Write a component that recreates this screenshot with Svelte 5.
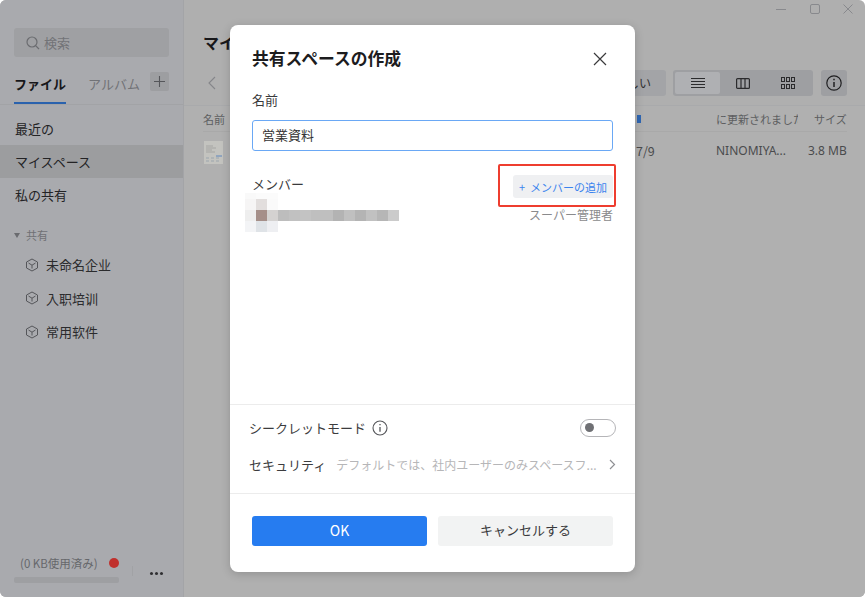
<script>
  const nav = ['未命名企业', '入职培训', '常用软件'];
  const cells = [
    ['#f9f9f9', '#fbfbfb', '#fbfbfb'],
    ['#f6f5f5', '#e2dedd', '#fafafa'],
    ['#eeeeee', '#a58f89', '#d4d2d1'],
    ['#f3f4f6', '#dfe3e7', '#eeeff2']
  ].flat();
  const blur = ['#bdbdbd', '#c1c1c1', '#c3c3c3', '#bfbfbf', '#bfbfbf', '#b3b3b3', '#c0c0c0', '#b4b4b4', '#c1c1c1', '#b6b6b6', '#cbcbcb'];
</script>

<div class="win">
  <aside class="side">
    <div class="search">
      <svg width="16" height="16" viewBox="0 0 16 16" fill="none" stroke="#6b6c70" stroke-width="1.2"><circle cx="7" cy="7" r="5"/><path d="M10.6 10.6 14 14"/></svg>
      <span>検索</span>
    </div>
    <div class="tabs">
      <span class="tab on">ファイル</span>
      <span class="tab">アルバム</span>
      <span class="plus">
        <svg width="11" height="11" viewBox="0 0 11 11" stroke="#55565a" stroke-width="1.1"><path d="M5.5 0v11M0 5.5h11"/></svg>
      </span>
    </div>
    <nav class="nav">
      <div class="item">最近の</div>
      <div class="item cur">マイスペース</div>
      <div class="item">私の共有</div>
    </nav>
    <div class="group"><i></i>共有</div>
    {#each nav as n}
      <div class="sub">
        <svg width="14" height="14" viewBox="0 0 14 14" fill="none" stroke="#55565a" stroke-width="1"><path d="M7 1 12.5 4v6L7 13 1.500 10V4z"/><path d="M3.500 5 7 7.200 10.500 5M7 7.200V10.500"/></svg>
        <span>{n}</span>
      </div>
    {/each}
    <div class="foot">
      <div class="usage">
        <div class="uline"><span>(0 KB使用済み)</span><b></b></div>
        <div class="bar"></div>
      </div>
      <div class="divider"></div>
      <div class="dots"><i></i><i></i><i></i></div>
    </div>
  </aside>

  <main class="main">
    <div class="wctl">
      <svg width="12" height="12" viewBox="0 0 12 12" stroke="#88898d" fill="none"><path d="M1 6.500h10"/></svg>
      <svg width="12" height="12" viewBox="0 0 12 12" stroke="#88898d" fill="none"><rect x="1.500" y="1.500" width="9" height="9" rx="1.500"/></svg>
      <svg width="12" height="12" viewBox="0 0 12 12" stroke="#88898d" fill="none"><path d="M1.500 1.500l9 9M10.500 1.500l-9 9"/></svg>
    </div>
    <div class="heading">マイスペース</div>
    <div class="tools">
      <svg class="back" width="8" height="14" viewBox="0 0 8 14" fill="none" stroke="#85868a" stroke-width="1.100"><path d="M7 1 1 7l6 6"/></svg>
      <div class="sp"></div>
      <div class="tbtn">しい</div>
      <div class="seg">
        <span class="segon">
          <svg width="14" height="10" viewBox="0 0 14 10" stroke="#2b2b2d"><path d="M0 .5h14M0 3.500h14M0 6.500h14M0 9.500h14"/></svg>
        </span>
        <span>
          <svg width="14" height="11" viewBox="0 0 14 11" fill="none" stroke="#2b2b2d" stroke-width="1.200"><rect x=".6" y=".6" width="12.800" height="9.800" rx="1"/><path d="M5 .6v9.800M9 .6v9.800"/></svg>
        </span>
        <span>
          <svg width="14" height="12" viewBox="0 0 14 12" fill="none" stroke="#2b2b2d"><rect x=".5" y=".5" width="3" height="4"/><rect x="5.500" y=".5" width="3" height="4"/><rect x="10.500" y=".5" width="3" height="4"/><rect x=".5" y="7.500" width="3" height="4"/><rect x="5.500" y="7.500" width="3" height="4"/><rect x="10.500" y="7.500" width="3" height="4"/></svg>
        </span>
      </div>
      <div class="ibtn">
        <svg width="16" height="16" viewBox="0 0 16 16" fill="none" stroke="#1f1f21" stroke-width="1.200"><circle cx="8" cy="8" r="7.200"/><path d="M8 7v5M8 3.800v1.500" stroke-width="1.500"/></svg>
      </div>
    </div>
    <div class="tablewrap">
      <div class="thead">
        <span class="cname">名前</span>
        <span class="mark"></span>
        <span class="cupd">に更新されました</span>
        <span class="csize">サイズ</span>
      </div>
      <div class="trow">
        <svg class="thumb" width="19" height="23" viewBox="0 0 19 23">
          <rect width="19" height="23" fill="#c3c3bf"/>
          <path d="M2 5h7M2 7h10M2 9h6M2 11h9" stroke="#a5a5a3" stroke-width="1"/>
          <path d="M12 15h6" stroke="#5f86bd" stroke-width="1"/>
          <path d="M2 17h3M7 17h3M12 17h3M2 20h3M7 20h3M12 20h3" stroke="#a9b0b4" stroke-width="1.500"/>
        </svg>
        <span class="date">7/9</span>
        <span class="owner">NINOMIYA...</span>
        <span class="size">3.8 MB</span>
      </div>
    </div>
  </main>

  <section class="dlg">
    <header class="dhead">
      <h2>共有スペースの作成</h2>
      <svg width="14" height="14" viewBox="0 0 14 14" stroke="#3a3a3c" stroke-width="1.200" fill="none"><path d="M1 1l12 12M13 1 1 13"/></svg>
    </header>
    <div class="lab">名前</div>
    <div class="inp">営業資料</div>
    <div class="mem">
      <span class="memlab">メンバー</span>
      <span class="addwrap"><span class="add">+&nbsp; メンバーの追加</span></span>
    </div>
    <div class="person">
      <div class="pix">
        {#each cells as c}<i style:background={c}></i>{/each}
      </div>
      <div class="blurname">
        {#each blur as c}<i style:background={c}></i>{/each}
      </div>
      <span class="role">スーパー管理者</span>
    </div>
    <div class="fill"></div>
    <div class="opts">
      <div class="opt">
        <span class="optl">シークレットモード</span>
        <svg class="info" width="16" height="16" viewBox="0 0 16 16" fill="none" stroke="#55565a" stroke-width="1.100"><circle cx="8" cy="8" r="7"/><path d="M8 7v4.800M8 4v1.300" stroke-width="1.300"/></svg>
        <span class="tog"><i></i></span>
      </div>
      <div class="opt sec">
        <span class="optl">セキュリティ</span>
        <span class="hint">デフォルトでは、社内ユーザーのみスペースフ...</span>
        <svg width="7" height="11" viewBox="0 0 7 11" fill="none" stroke="#8f9094" stroke-width="1.200"><path d="M1 1l4.500 4.500L1 10"/></svg>
      </div>
    </div>
    <footer class="dfoot">
      <button class="ok">OK</button>
      <button class="cancel">キャンセルする</button>
    </footer>
  </section>
</div>

<style>
  :global(body) { margin: 0; background: #fff; }
  .win {
    position: relative;
    width: 865px;
    height: 597px;
    display: flex;
    overflow: hidden;
    border-radius: 6px;
    background: #afafaf;
    font-family: "Noto Sans CJK JP", "Noto Sans", sans-serif;
    color: #2a2a2c;
  }
  .side {
    width: 184px;
    flex: none;
    box-sizing: border-box;
    padding-top: 28px;
    background: #a9aaae;
    border-right: 1px solid #a3a4a7;
    display: flex;
    flex-direction: column;
  }
  .search {
    margin: 0 14px;
    height: 29px;
    border-radius: 3px;
    background: #9fa0a3;
    display: flex;
    align-items: center;
    gap: 3px;
    padding-left: 11px;
    font-size: 13px;
    color: #727377;
  }
  .tabs {
    height: 48px;
    box-sizing: border-box;
    display: flex;
    align-items: center;
    border-bottom: 1px solid #a2a3a6;
    padding: 4px 15px 0 14px;
    position: relative;
    font-size: 13px;
    color: #717276;
  }
  .tab { margin-right: 22px; padding-top: 1px; height: 31px; box-sizing: border-box; align-self: flex-end; white-space: nowrap; }
  .tab.on { color: #17171a; font-weight: 700; border-bottom: 2px solid #2a62ad; margin-right: 22px; }
  .plus {
    position: absolute;
    right: 14px;
    top: 15px;
    width: 19px;
    height: 19px;
    border-radius: 2px;
    background: #9d9ea1;
    display: grid;
    place-items: center;
  }
  .nav { margin-top: 7px; }
  .item { height: 33px; line-height: 33px; padding-left: 15px; font-size: 13px; color: #232325; }
  .item.cur { background: #9c9d9f; }
  .group { margin-top: 13px; margin-bottom: 2px; height: 22px; display: flex; align-items: center; padding-left: 14px; font-size: 11px; color: #707175; gap: 6px; }
  .group i { width: 0; height: 0; border-left: 3.500px solid transparent; border-right: 3.500px solid transparent; border-top: 5px solid #6a6b6f; }
  .sub { height: 33.500px; display: flex; align-items: center; padding-left: 25px; gap: 7px; font-size: 13px; color: #2b2b2d; }
  .foot { margin-top: auto; height: 43px; display: flex; padding: 0 20px 0 14px; box-sizing: border-box; margin-bottom: 2px; }
  .usage { width: 105px; flex: none; }
  .uline { display: flex; align-items: center; justify-content: space-between; font-size: 11.500px; color: #66676b; padding: 0 0 0 6px; height: 22px; white-space: nowrap; }
  .uline b { width: 10px; height: 10px; border-radius: 50%; background: #c0302c; flex: none; }
  .bar { height: 6px; margin-top: 3px; border-radius: 2px; background: #9e9fa2; }
  .divider { width: 1px; height: 10px; background: #a1a2a5; margin: 14px 0 0 13px; }
  .dots { display: flex; gap: 2px; margin: 20px 0 0 17px; height: 3px; }
  .dots i { width: 3px; height: 3px; border-radius: 50%; background: #2f2f31; }

  .main { flex: 1; display: flex; flex-direction: column; min-width: 0; }
  .wctl { height: 20px; display: flex; justify-content: flex-end; align-items: center; gap: 21.500px; padding-right: 11px; }
  .wctl svg { position: relative; top: -1px; }
  .heading { height: 45px; padding: 1px 0 0 19px; box-sizing: border-box; margin-top: 9px; font-size: 16px; font-weight: 700; color: #17171a; }
  .tools { height: 30px; display: flex; align-items: center; gap: 8px; padding: 0 18px 0 24px; margin-top: -6px; margin-bottom: 7px; }
  .sp { flex: 1; }
  .tbtn { height: 26px; width: 50px; box-sizing: border-box; border-radius: 3px; background: #a3a4a7; font-size: 12px; line-height: 26px; padding-right: 15px; text-align: right; color: #2f2f31; margin-right: -1px; }
  .seg { height: 26px; padding: 2px; width: 140px; box-sizing: border-box; border-radius: 3px; background: #9e9fa2; display: flex; }
  .seg span { flex: 1; display: grid; place-items: center; border-radius: 2px; }
  .seg .segon { background: #afb0b3; flex: 0 0 45px; }
  .ibtn { height: 26px; width: 26px; border-radius: 3px; background: #9e9fa2; display: grid; place-items: center; }
  .tablewrap { flex: 1; background: #b0b0b0; border-top: 1px solid #a9aaac; padding: 0 18px 0 19px; }
  .thead { height: 25px; display: flex; align-items: center; border-bottom: 1px solid #a9a9a9; font-size: 11px; color: #5d5e60; }
  .cname { width: 434px; flex: none; }
  .mark { width: 4px; height: 8px; background: #2f66b2; margin-right: 75px; flex: none; }
  .cupd { width: 82px; flex: none; white-space: nowrap; overflow: hidden; margin-right: 16px; }
  .csize { white-space: nowrap; }
  .trow { height: 36px; display: flex; align-items: center; font-size: 12px; color: #4a4b4d; }
  .thumb { flex: none; margin: 5px 0 0 1px; }
  .date { margin-left: 413px; width: 80px; flex: none; font-size: 12.500px; }
  .owner { width: 92px; flex: none; font-family: "Noto Sans", sans-serif; }
  .size { white-space: nowrap; font-family: "Noto Sans", sans-serif; }

  .dlg {
    position: absolute;
    left: 230px;
    top: 25px;
    width: 405px;
    height: 547px;
    background: #fff;
    border-radius: 8px;
    box-shadow: 0 2px 10px rgba(0, 0, 0, 0.18);
    display: flex;
    flex-direction: column;
    box-sizing: border-box;
  }
  .dhead { display: flex; align-items: center; justify-content: space-between; padding: 20px 28px 0 22px; height: 27px; }
  h2 { margin: 0; font-size: 16.800px; font-weight: 700; color: #1c1c1e; line-height: 27px; }
  .lab { margin: 17px 22px 0; font-size: 13px; line-height: 22px; color: #3a3a3c; }
  .inp {
    margin: 9px 22px 0;
    height: 31px;
    box-sizing: border-box;
    border: 1px solid #6aa8f5;
    border-radius: 3px;
    padding-left: 9px;
    font-size: 13px;
    line-height: 28px;
    color: #333;
  }
  .mem { margin: 13px 22px 0; height: 43px; display: flex; justify-content: space-between; align-items: center; }
  .memlab { font-size: 13px; color: #3a3a3c; margin-bottom: 4px; }
  .addwrap {
    position: relative;
    right: -3px;
    width: 118px;
    height: 43px;
    box-sizing: border-box;
    border: 2px solid #ee3d2f;
    border-radius: 2px;
    padding: 9px 0 0 13px;
  }
  .add {
    display: block;
    width: 100px;
    height: 23px;
    border-radius: 3px;
    background: #eff0f2;
    font-size: 11px;
    line-height: 24px;
    color: #3b84ee;
    padding-left: 6px;
    box-sizing: border-box;
    white-space: nowrap;
  }
  .person { position: relative; height: 34px; margin-top: -14px; }
  .pix { position: absolute; left: 15px; top: 0; display: grid; grid-template-columns: repeat(3, 11px); grid-template-rows: 6px 11px 11px 11px; }
  .pix i, .blurname i { display: block; }
  .blurname { position: absolute; left: 48px; top: 17px; display: grid; grid-template-columns: repeat(11, 11px); grid-auto-rows: 11px; }
  .role { position: absolute; right: 22px; top: 14px; font-size: 12px; line-height: 16px; color: #8a8a8c; }
  .fill { flex: 1; }
  .opts { border-top: 1px solid #ececec; border-bottom: 1px solid #ececec; height: 90px; padding: 0 19px; box-sizing: border-box; }
  .opt { display: flex; align-items: center; height: 37px; font-size: 13px; color: #3c3c3e; }
  .opt:first-child { margin-top: 4px; }
  .optl { white-space: nowrap; }
  .info { margin-left: 6px; }
  .tog { margin-left: auto; width: 36px; height: 18px; box-sizing: border-box; border: 1px solid #b5b5b8; border-radius: 9px; display: flex; align-items: center; padding-left: 4px; }
  .tog i { width: 9px; height: 9px; border-radius: 50%; background: #6f7074; }
  .sec { justify-content: flex-start; }
  .hint { margin-left: 10px; font-size: 12px; color: #b6b6b8; white-space: nowrap; flex: 1; }
  .dfoot { display: flex; justify-content: space-between; padding: 22px 22px 26px; }
  button { width: 175px; height: 30px; border: 0; border-radius: 3px; font-family: inherit; font-size: 13px; line-height: 28px; padding: 0 0 2px; }
  .ok { background: #267cf0; color: #fff; font-size: 14px; }
  .cancel { background: #f2f3f3; color: #3a3a3c; }
</style>
